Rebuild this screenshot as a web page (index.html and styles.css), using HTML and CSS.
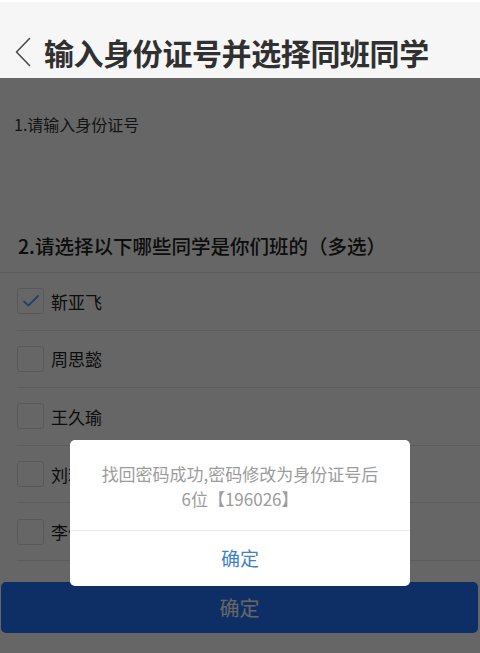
FILE: index.html
```html
<!DOCTYPE html>
<html lang="zh-CN">
<head>
<meta charset="utf-8">
<title>输入身份证号并选择同班同学</title>
<link rel="stylesheet" href="styles.css">
</head>
<body>
<div class="app">
  <header class="navbar">
    <span class="back">
      <svg width="18" height="30" viewBox="0 0 18 30"><path d="M15.5 1.5 L2.5 15 L15.5 28.5" fill="none" stroke="#4a4a4a" stroke-width="1.6" stroke-linecap="round" stroke-linejoin="round"/></svg>
    </span>
    <h1 class="title">输入身份证号并选择同班同学</h1>
  </header>
  <main class="page">
    <section class="q1">
      <div class="q1-label">1.请输入身份证号</div>
      <div class="id-input"></div>
    </section>
    <section class="q2">
      <div class="q2-label">2.请选择以下哪些同学是你们班的（多选）</div>
    </section>
    <ul class="list">
      <li class="row"><span class="box checked"><svg width="18" height="14" viewBox="0 0 18 14"><path d="M2 7.5 L6.5 11.5 L16 2" fill="none" stroke="#5a9dff" stroke-width="1.8" stroke-linecap="round" stroke-linejoin="round"/></svg></span><span class="name">靳亚飞</span></li>
      <li class="row"><span class="box"></span><span class="name">周思懿</span></li>
      <li class="row"><span class="box"></span><span class="name">王久瑜</span></li>
      <li class="row"><span class="box"></span><span class="name">刘若涵</span></li>
      <li class="row"><span class="box"></span><span class="name">李佳琪</span></li>
    </ul>
    <div class="submit">确定</div>
  </main>
  <div class="mask"></div>
  <div class="dialog">
    <div class="dialog-msg">找回密码成功,密码修改为身份证号后<br>6位【196026】</div>
    <div class="dialog-btn">确定</div>
  </div>
</div>
</body>
</html>
```
FILE: styles.css
```css
* { box-sizing: border-box; margin: 0; padding: 0; }
html, body { width: 480px; height: 653px; overflow: hidden; }
body {
  font-family: "Noto Sans CJK SC", "Noto Sans", sans-serif;
  background: #fff;
  color: #333;
}
.app { position: relative; width: 480px; height: 653px; overflow: hidden; }

.navbar {
  height: 78px;
  background: #f6f6f6;
  border-top: 2px solid #fff;
  display: flex;
  align-items: center;
  padding-left: 14px;
  padding-top: 23px;
}
.back { display: flex; width: 18px; height: 30px; margin-right: 12px; }
.title {
  font-size: 30px;
  font-weight: 700;
  letter-spacing: -0.4px;
  color: #303030;
  line-height: 34px;
}

.page { background: #fff; }
.q1 { padding: 35px 0 0 14px; }
.q1-label { font-size: 16px; line-height: 22px; color: #333; }
.id-input { width: 227px; height: 72px; margin-left: -14px; background: #fff; }
.q2 { padding: 26px 0 13px 18px; border-bottom: 1px solid #e6e6e6; }
.q2-label { font-size: 19.5px; line-height: 26px; color: #222; font-weight: 500; }

.list { list-style: none; padding-left: 17px; }
.row {
  height: 57.6px;
  display: flex;
  align-items: center;
  border-bottom: 1px solid #e6e6e6;
}
.box {
  width: 27px;
  height: 26px;
  border: 1px solid #dcdcdc;
  border-radius: 3px;
  display: flex;
  align-items: center;
  justify-content: center;
  margin-right: 7px;
  background: #fff;
}
.name { font-size: 17px; color: #222; }

.submit {
  margin: 21px 2px 0 1px;
  height: 51px;
  border-radius: 5px;
  background: #2476ff;
  color: #fff;
  font-size: 20px;
  display: flex;
  align-items: center;
  justify-content: center;
}

.mask {
  position: absolute;
  left: 0; right: 0; top: 78px; bottom: 0;
  background: rgba(0, 0, 0, 0.6);
}
.dialog {
  position: absolute;
  left: 70px;
  top: 440px;
  width: 340px;
  height: 146px;
  background: #fff;
  border-radius: 5px;
  display: flex;
  flex-direction: column;
}
.dialog-msg {
  padding: 21px 10px 0;
  height: 91px;
  text-align: center;
  font-size: 17px;
  line-height: 25px;
  color: #9c9c9c;
  border-bottom: 1px solid #ececec;
}
.dialog-btn {
  flex: 1;
  display: flex;
  align-items: center;
  justify-content: center;
  font-size: 19px;
  color: #3f7fc8;
  padding-bottom: 2px;
}
```
